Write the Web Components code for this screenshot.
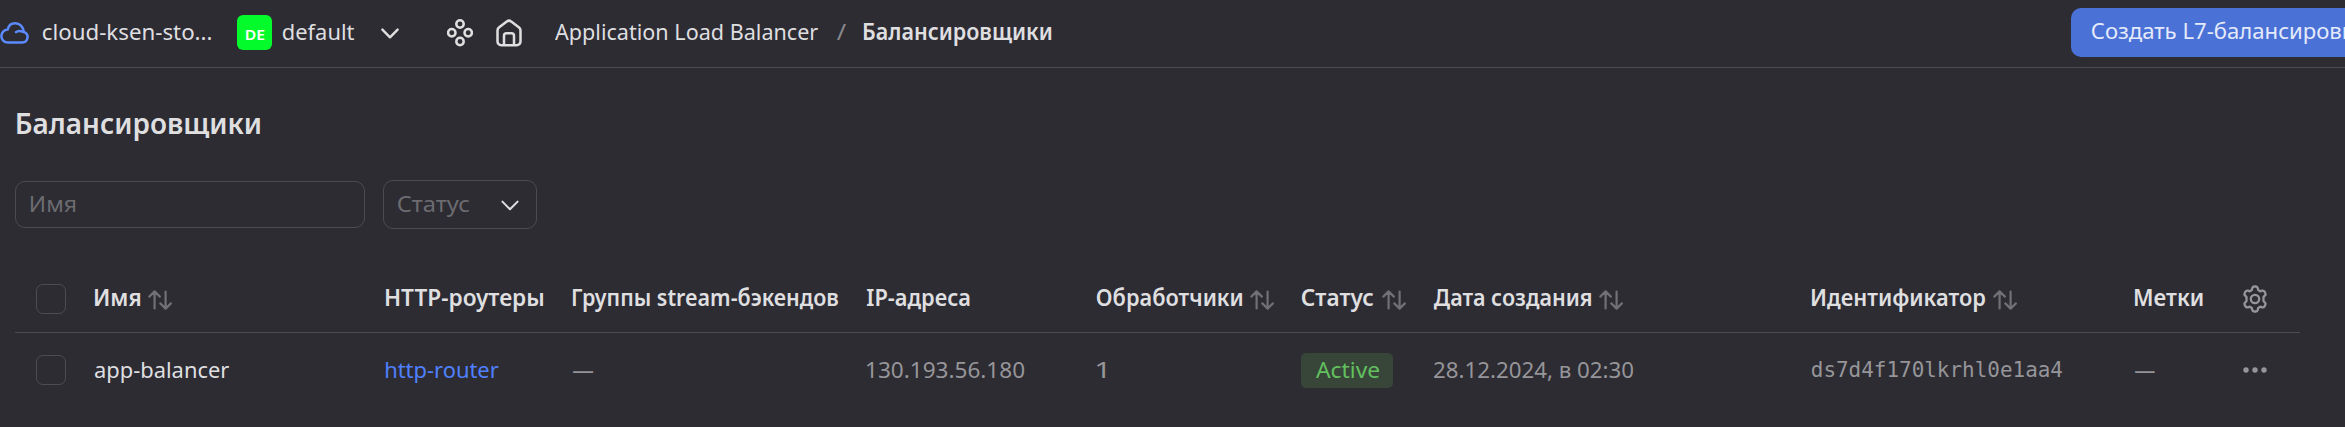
<!DOCTYPE html>
<html lang="ru"><head><meta charset="utf-8"><title>Балансировщики</title>
<style>html,body{margin:0;background:#2d2c33}body{font-family:"Noto Sans","Open Sans",sans-serif;font-size:22.5px;color:#dfdfe0;width:2345px;height:427px;overflow:hidden}</style></head>
<body><console-page></console-page>
<script>
const define=(name,html,init)=>customElements.define(name,class extends HTMLElement{
  connectedCallback(){if(this.shadowRoot)return;const r=this.attachShadow({mode:'open'});r.innerHTML=html;if(init)init(this,r)}
});
const pen=document.createElement('canvas').getContext('2d');
define('ui-text','<style>:host{display:block;flex:none;white-space:nowrap;line-height:30px;height:30px}span{display:inline-block;transform-origin:0 50%}</style><span><slot></slot></span>',(el,r)=>{
  // Measured at ten times the size, so that the ink edges are not rounded to whole pixels.
  const c=getComputedStyle(el),span=r.querySelector('span');
  pen.font=`${c.fontWeight} ${parseFloat(c.fontSize)*10}px ${c.fontFamily}`;
  const m=pen.measureText(el.textContent),w=+el.getAttribute('w');
  const left=m.actualBoundingBoxLeft/10,k=w/(m.actualBoundingBoxRight/10+left);
  el.style.width=w+'px';
  span.style.transform=`translateX(${left*k}px) scaleX(${k})`;
});
const icons={
 cloud:[30,24,'<path d="M8 21.6h14.5a5.4 5.4 0 0 0 2.6-10.2A8.9 8.9 0 0 0 7.9 8.6 6.6 6.6 0 0 0 8 21.6ZM15.800 10.200a4.300 4.300 0 0 1 4.600-3" stroke="none"/><path d="M8 21.600h14.200a5.500 5.500 0 0 0 1.600-10.700C23.300 5.600 19.700 2.200 15.300 2.200c-4 0-6.900 2.700-7.600 6.400A6.500 6.500 0 0 0 8 21.600ZM16.200 11.500a5.800 5.800 0 0 1 7.200-1.200"/>',2.5],
 chevron:[18,12,'<path d="M1.400 1.600 9 9.300l7.600-7.700"/>',2.4],
 nodes:[26,28,'<circle cx="13" cy="5" r="3.700"/><circle cx="4.800" cy="13.800" r="3.700"/><circle cx="21.200" cy="13.800" r="3.700"/><circle cx="13" cy="22.500" r="3.700"/>',2.5],
 home:[26,28,'<path d="M1.500 11.500a4 4 0 0 1 1.400-3L10.800 2.600a3.300 3.300 0 0 1 4.400 0l7.900 5.900a4 4 0 0 1 1.400 3V22.500a3.700 3.700 0 0 1-3.700 3.700H5.200a3.700 3.700 0 0 1-3.700-3.700ZM8 26v-9.300a2.500 2.500 0 0 1 2.500-2.500h5a2.500 2.500 0 0 1 2.500 2.500V26"/>',2.5],
 sort:[24,20,'<path d="M6.600 18.500V1.500M1.300 6.600l5.300-5.200 5.300 5.200M17.600 1.500v17M12.300 13.400l5.300 5.200 5.300-5.200"/>',2.2],
 gear:[28,28,'<circle cx="14" cy="14" r="4.200"/><path d="M11.200 3.300Q11.600 1.500 13.200 1.500h1.600q1.600 0 2 1.800l.4 1.800 2 1.200 1.800-.6q1.700-.5 2.500.9l.8 1.400q.8 1.400-.5 2.600L22.500 12v4l1.300 1.400q1.300 1.200.5 2.600l-.8 1.400q-.8 1.400-2.500.9l-1.800-.6-2 1.200-.4 1.800q-.4 1.800-2 1.800h-1.600q-1.600 0-2-1.800l-.4-1.800-2-1.200-1.800.6q-1.700.5-2.500-.9L3.700 20q-.8-1.400.5-2.600L5.500 16v-4l-1.300-1.400Q2.900 9.400 3.700 8l.8-1.400Q5.300 5.200 7 5.700l1.800.6 2-1.200Z"/>',2.3],
 dots:[24,8,'<g fill="currentColor" stroke="none"><circle cx="3" cy="4" r="2.700"/><circle cx="12" cy="4" r="2.700"/><circle cx="21" cy="4" r="2.700"/></g>',1]
};
icons.cloud[2]=icons.cloud[2].slice(icons.cloud[2].indexOf('/>')+2).replace('M16.200 11.500a5.800 5.800 0 0 1 7.200-1.200','M16 11.200q2.600-2.400 7.200-.3');
define('ui-icon','<style>:host{display:block;flex:none}svg{display:block}</style>',(el,r)=>{
  const [w,h,p,s]=icons[el.getAttribute('name')];
  r.innerHTML+=`<svg width="${w}" height="${h}" viewBox="0 0 ${w} ${h}" fill="none" stroke="currentColor" stroke-width="${el.getAttribute('stroke')||s}" stroke-linecap="round" stroke-linejoin="round">${p}</svg>`;
});
define('ui-check','<style>:host{display:block;box-sizing:border-box;width:30px;height:30px;border:1px solid #4d4c52;border-radius:7px}</style>');
define('folder-badge','<style>:host{display:flex;flex:none;box-sizing:border-box;width:35px;height:35px;border-radius:6px;background:#04fb2b;color:#fff;font-size:14px;font-weight:600;align-items:center;justify-content:center;padding-top:2px}</style><slot></slot>');
define('status-label','<style>:host{display:flex;box-sizing:border-box;width:92px;height:35px;border-radius:5px;background:#384539;color:#62c05f;padding:1.500px 0 0 15px}</style><slot></slot>');
define('ui-button','<style>:host{display:block;box-sizing:border-box;flex:none;width:340px;height:49px;border-radius:10px;background:#4a71d6;color:#e4eafa;padding:8px 0 0 21px}</style><slot></slot>');
define('ui-field','<style>:host{display:flex;box-sizing:border-box;border:1px solid #4c4b51;border-radius:10px;color:#6c6b70;align-items:center}</style><slot></slot>');
define('top-bar',`<style>
:host{display:flex;box-sizing:border-box;height:68px;border-bottom:1px solid #4c4b51;overflow:hidden}
ui-text{margin-top:16.500px}.bold{font-weight:600}.sep{color:#88878b}
.cloud{color:#5c8bff;margin:21px 13px 0 0}folder-badge{margin:15px 11px 0 26px}
.chev{margin:28px 48px 0 27px}.nodes{margin:19px 23px 0 0}.home{margin:19px 33px 0 0}
.sep{margin-left:19px;margin-right:18px}ui-button{margin:8px 0 0 1020px}
</style>
<ui-icon class="cloud" name="cloud"></ui-icon><ui-text w="168">cloud-ksen-sto...</ui-text>
<folder-badge><ui-text w="18" style="margin:0;font-size:15px">DE</ui-text></folder-badge><ui-text w="71">default</ui-text>
<ui-icon class="chev" name="chevron"></ui-icon><ui-icon class="nodes" name="nodes"></ui-icon><ui-icon class="home" name="home"></ui-icon>
<ui-text w="263">Application Load Balancer</ui-text><ui-text class="sep" w="9">/</ui-text><ui-text class="bold" w="187">Балансировщики</ui-text>
<ui-button><ui-text w="295" style="margin:0">Создать L7-балансировщик</ui-text></ui-button>`);
define('filter-bar',`<style>
:host{display:flex;align-items:center;gap:18px;height:49px}
.name{width:350px;height:47px;padding:0 0 1px 15px}.state{width:154px;height:49px;padding:0 0 1px 14px;gap:32px}
ui-icon{color:#e0e0e1;margin-top:4px}
</style><ui-field class="name"><ui-text w="44">Имя</ui-text></ui-field>
<ui-field class="state"><ui-text w="71">Статус</ui-text><ui-icon name="chevron" stroke="2"></ui-icon></ui-field>`);
define('balancer-table',`<style>
:host{display:block;width:2285px}
.row{display:grid;grid-template-columns:79.500px 291px 187px 294.500px 229.500px 205.500px 131.500px 378px 323px 108px 57.500px;box-sizing:border-box;height:71px;align-items:start}
.head{height:66px;border-bottom:1px solid #4c4b51;font-weight:600}
.row>*{margin-top:15.500px}
.head ui-text{margin:0}.h{display:flex;gap:8.500px}.h ui-icon{color:#717075;margin-top:7px}
ui-check.c{margin:17px 0 0 21px}.body ui-check.c{margin-top:22px}
.body{color:#969599}.body>ui-text{margin-top:21.500px}.main{color:#dfdfe0}.link{color:#4f80ff}
.mono{font-family:"DejaVu Sans Mono",monospace;font-size:20.500px}
.body status-label{margin:20px 0 0 -1px}.body .dots{margin:33px 0 0}.head .gear{color:#969599;margin:18px 0 0 -2px}
</style>
<div class="row head"><ui-check class="c"></ui-check>
<div class="h"><ui-text w="45">Имя</ui-text><ui-icon name="sort"></ui-icon></div>
<div class="h"><ui-text w="157">HTTP-роутеры</ui-text></div>
<div class="h"><ui-text w="265">Группы stream-бэкендов</ui-text></div>
<div class="h"><ui-text w="102.500">IP-адреса</ui-text></div>
<div class="h"><ui-text w="145">Обработчики</ui-text><ui-icon name="sort"></ui-icon></div>
<div class="h"><ui-text w="71">Статус</ui-text><ui-icon name="sort"></ui-icon></div>
<div class="h"><ui-text w="157">Дата создания</ui-text><ui-icon name="sort"></ui-icon></div>
<div class="h"><ui-text w="173">Идентификатор</ui-text><ui-icon name="sort"></ui-icon></div>
<div class="h"><ui-text w="67.500">Метки</ui-text></div>
<ui-icon class="gear" name="gear"></ui-icon></div>
<div class="row body"><ui-check class="c"></ui-check>
<ui-text class="main" w="134">app-balancer</ui-text><ui-text class="link" w="112.500">http-router</ui-text><ui-text w="20">—</ui-text>
<ui-text w="157">130.193.56.180</ui-text><ui-text w="8">1</ui-text><status-label><ui-text w="63">Active</ui-text></status-label>
<ui-text w="199">28.12.2024, в 02:30</ui-text><ui-text class="mono" w="250">ds7d4f170lkrhl0e1aa4</ui-text><ui-text w="19.500">—</ui-text><ui-icon class="dots" name="dots"></ui-icon></div>`);
define('console-page',`<style>
:host{display:flex;flex-direction:column;height:427px}
main{padding:39.500px 0 0 15px}.title{font-size:29.500px;font-weight:600;margin:0 0 42.500px 1.500px}balancer-table{margin-top:38px}
</style><top-bar></top-bar><main><ui-text class="title" w="243">Балансировщики</ui-text><filter-bar></filter-bar><balancer-table></balancer-table></main>`);
</script></body></html>
